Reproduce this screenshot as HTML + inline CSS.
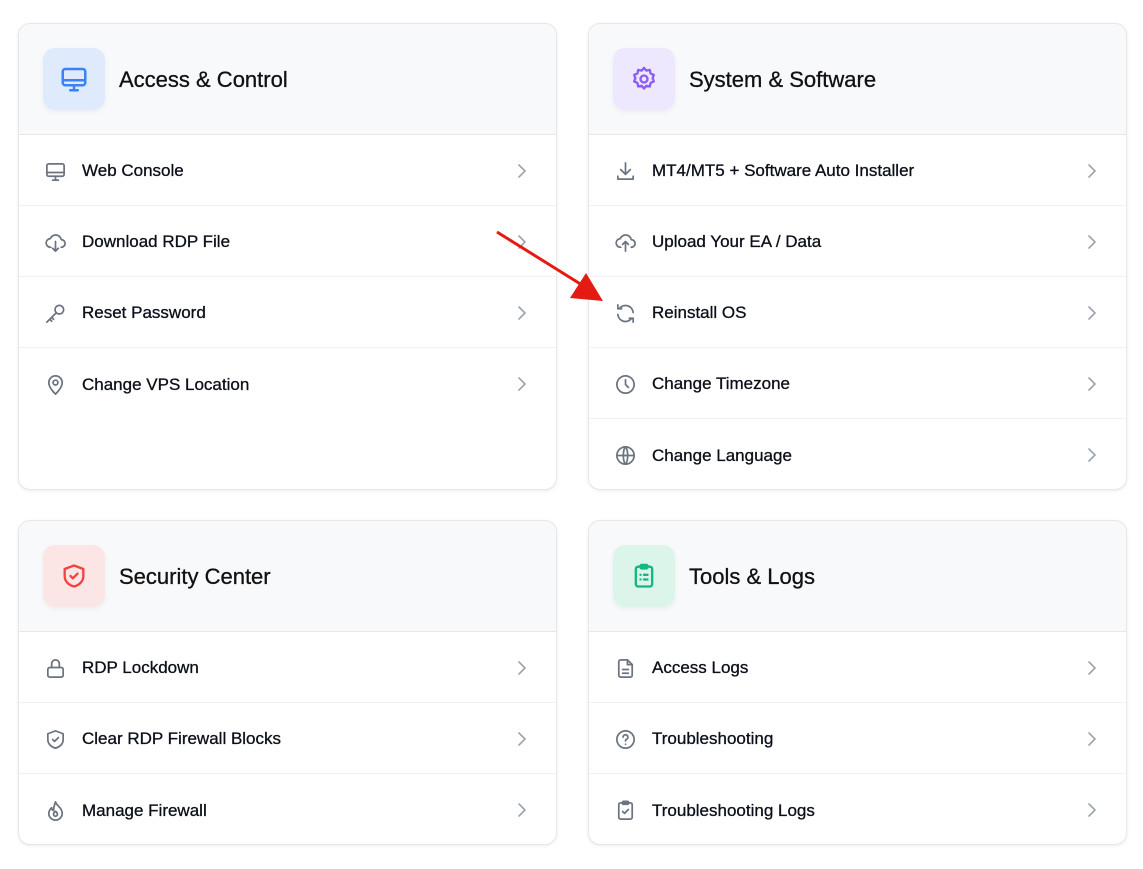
<!DOCTYPE html>
<html><head><style>
*{box-sizing:border-box;margin:0;padding:0}
body{width:1143px;height:869px;background:#fff;font-family:"Liberation Sans",sans-serif;color:#0b0f19;position:relative;overflow:hidden}
.card{position:absolute;border:1px solid #e5e7eb;border-radius:12px;background:#fff;box-shadow:0 1px 3px rgba(0,0,0,.08);overflow:hidden}
.hd{height:111px;background:#f8f9fb;border-bottom:1px solid #e5e7eb;display:flex;align-items:center;padding-left:24px}
.ib{width:62px;height:62px;border-radius:12px;display:flex;align-items:center;justify-content:center;box-shadow:0 2px 6px rgba(0,0,0,.05)}
.hd h2{font-weight:normal;font-size:22px;margin-left:14px;color:#111;-webkit-text-stroke:0.3px #111;padding-top:2px}
.row{height:71px;border-bottom:1px solid #f0f1f3;display:flex;align-items:center;padding-left:25px;font-size:17px;position:relative;-webkit-text-stroke:0.3px #0b0f19;padding-top:2px}
.row:last-child{border-bottom:none}
.row svg.i{width:23px;height:23px;margin-right:15px;stroke:#6b7280;fill:none;stroke-width:1.8;stroke-linecap:round;stroke-linejoin:round;-webkit-text-stroke:0}
.row .ch{position:absolute;right:30px;top:29px;width:9px;height:14px}
</style></head><body>
<svg width="0" height="0" style="position:absolute"><defs>
<symbol id="chev" viewBox="0 0 9 14"><path d="M2 1l6 6-6 6" stroke="#9ca3af" stroke-width="1.6" fill="none" stroke-linecap="round"/></symbol>
</defs></svg>

<div class="card" style="left:18px;top:23px;width:539px;height:467px">
<div class="hd"><div class="ib" style="background:#dfeafd"><svg width="30" height="30" viewBox="0 0 24 24" fill="none" stroke="#3b82f6" stroke-width="2" stroke-linecap="round" stroke-linejoin="round"><rect x="3" y="4" width="18" height="13" rx="2"/><path d="M3 13h18M9 21h6M12 17v4"/></svg></div><h2>Access &amp; Control</h2></div>
<div class="row"><svg class="i" viewBox="0 0 24 24"><rect x="3" y="4" width="18" height="13" rx="2"/><path d="M3 13h18M9 21h6M12 17v4"/></svg>Web Console<svg class="ch"><use href="#chev"/></svg></div>
<div class="row"><svg class="i" viewBox="0 0 24 24"><path d="M7 17a4.5 4.5 0 0 1-.5-9A6 6 0 0 1 18 9a4 4 0 0 1 0 8M12 11v10M9 18l3 3 3-3"/></svg>Download RDP File<svg class="ch"><use href="#chev"/></svg></div>
<div class="row"><svg class="i" viewBox="0 0 24 24"><circle cx="16" cy="8" r="4.5"/><path d="M12.8 11.2L3 21M6 18l2 2M8 16l2 2"/></svg>Reset Password<svg class="ch"><use href="#chev"/></svg></div>
<div class="row"><svg class="i" viewBox="0 0 24 24"><path d="M12 22s7-6.5 7-12a7 7 0 0 0-14 0c0 5.5 7 12 7 12z"/><circle cx="12" cy="10" r="2.5"/></svg>Change VPS Location<svg class="ch"><use href="#chev"/></svg></div>
</div>

<div class="card" style="left:588px;top:23px;width:539px;height:467px">
<div class="hd"><div class="ib" style="background:#ede8fd"><svg width="28" height="28" viewBox="0 0 24 24" fill="none" stroke="#8b5cf6" stroke-width="2" stroke-linecap="round" stroke-linejoin="round"><circle cx="12" cy="12" r="3"/><path d="M12 2.5l2 2.3 3-.6.6 3 2.8 1.3-1 2.8 1 2.8-2.8 1.3-.6 3-3-.6-2 2.3-2-2.3-3 .6-.6-3-2.8-1.3 1-2.8-1-2.8 2.8-1.3.6-3 3 .6z"/></svg></div><h2>System &amp; Software</h2></div>
<div class="row"><svg class="i" viewBox="0 0 24 24"><path d="M12 3v12M7 10l5 5 5-5M4 17v3h16v-3"/></svg>MT4/MT5 + Software Auto Installer<svg class="ch"><use href="#chev"/></svg></div>
<div class="row"><svg class="i" viewBox="0 0 24 24"><path d="M7 17a4.5 4.5 0 0 1-.5-9A6 6 0 0 1 18 9a4 4 0 0 1 0 8M12 21V11M9 14l3-3 3 3"/></svg>Upload Your EA / Data<svg class="ch"><use href="#chev"/></svg></div>
<div class="row"><svg class="i" viewBox="0 0 24 24"><path d="M20 11A8 8 0 0 0 5.5 7M4 3v4h4M4 13a8 8 0 0 0 14.5 4M20 21v-4h-4"/></svg>Reinstall OS<svg class="ch"><use href="#chev"/></svg></div>
<div class="row"><svg class="i" viewBox="0 0 24 24"><circle cx="12" cy="12" r="9"/><path d="M12 7v5l3 3"/></svg>Change Timezone<svg class="ch"><use href="#chev"/></svg></div>
<div class="row"><svg class="i" viewBox="0 0 24 24"><circle cx="12" cy="12" r="9"/><path d="M3 12h18M12 3c3 3 3 15 0 18M12 3c-3 3-3 15 0 18"/></svg>Change Language<svg class="ch"><use href="#chev"/></svg></div>
</div>

<div class="card" style="left:18px;top:520px;width:539px;height:325px">
<div class="hd"><div class="ib" style="background:#fbe5e5"><svg width="28" height="28" viewBox="0 0 24 24" fill="none" stroke="#ef4444" stroke-width="2" stroke-linecap="round" stroke-linejoin="round"><path d="M12 3l8 3v6c0 5-4 8-8 9-4-1-8-4-8-9V6z"/><path d="M9 12l2 2 4-4"/></svg></div><h2>Security Center</h2></div>
<div class="row"><svg class="i" viewBox="0 0 24 24"><rect x="4" y="11" width="16" height="10" rx="2"/><path d="M8 11V7a4 4 0 0 1 8 0v4"/></svg>RDP Lockdown<svg class="ch"><use href="#chev"/></svg></div>
<div class="row"><svg class="i" viewBox="0 0 24 24"><path d="M12 3l8 3v6c0 5-4 8-8 9-4-1-8-4-8-9V6z"/><path d="M9 12l2 2 4-4"/></svg>Clear RDP Firewall Blocks<svg class="ch"><use href="#chev"/></svg></div>
<div class="row"><svg class="i" viewBox="0 0 24 24"><path d="M12 3c1 4 7 6 7 12a7 7 0 0 1-14 0c0-3 2-5 3-6 0 2 1 3 2 3 0-4 1-6 2-9z"/><path d="M12 18a2 2 0 0 0 2-2c0-2-2-3-2-3s-2 1-2 3a2 2 0 0 0 2 2z"/></svg>Manage Firewall<svg class="ch"><use href="#chev"/></svg></div>
</div>

<div class="card" style="left:588px;top:520px;width:539px;height:325px">
<div class="hd"><div class="ib" style="background:#dcf5ea"><svg width="28" height="28" viewBox="0 0 24 24" fill="none" stroke="#10b981" stroke-width="2" stroke-linecap="round" stroke-linejoin="round"><rect x="5" y="4" width="14" height="17" rx="2"/><rect x="9" y="2.5" width="6" height="3" rx="1"/><path d="M9 11h.01M12 11h3M9 15h.01M12 15h3"/></svg></div><h2>Tools &amp; Logs</h2></div>
<div class="row"><svg class="i" viewBox="0 0 24 24"><path d="M14 3H7a2 2 0 0 0-2 2v14a2 2 0 0 0 2 2h10a2 2 0 0 0 2-2V8z"/><path d="M14 3v5h5M9 13h6M9 17h6"/></svg>Access Logs<svg class="ch"><use href="#chev"/></svg></div>
<div class="row"><svg class="i" viewBox="0 0 24 24"><circle cx="12" cy="12" r="9"/><path d="M9.5 9.5a2.5 2.5 0 1 1 3.5 2.3c-.7.3-1 .9-1 1.7M12 17h.01"/></svg>Troubleshooting<svg class="ch"><use href="#chev"/></svg></div>
<div class="row"><svg class="i" viewBox="0 0 24 24"><rect x="5" y="4" width="14" height="17" rx="2"/><rect x="9" y="2.5" width="6" height="3" rx="1"/><path d="M9 13l2 2 4-4"/></svg>Troubleshooting Logs<svg class="ch"><use href="#chev"/></svg></div>
</div>

<svg style="position:absolute;left:0;top:0" width="1143" height="869"><line x1="497" y1="232" x2="582" y2="285" stroke="#e31b12" stroke-width="3"/><polygon points="603,301 570,298 586,273" fill="#e31b12"/></svg>
</body></html>
